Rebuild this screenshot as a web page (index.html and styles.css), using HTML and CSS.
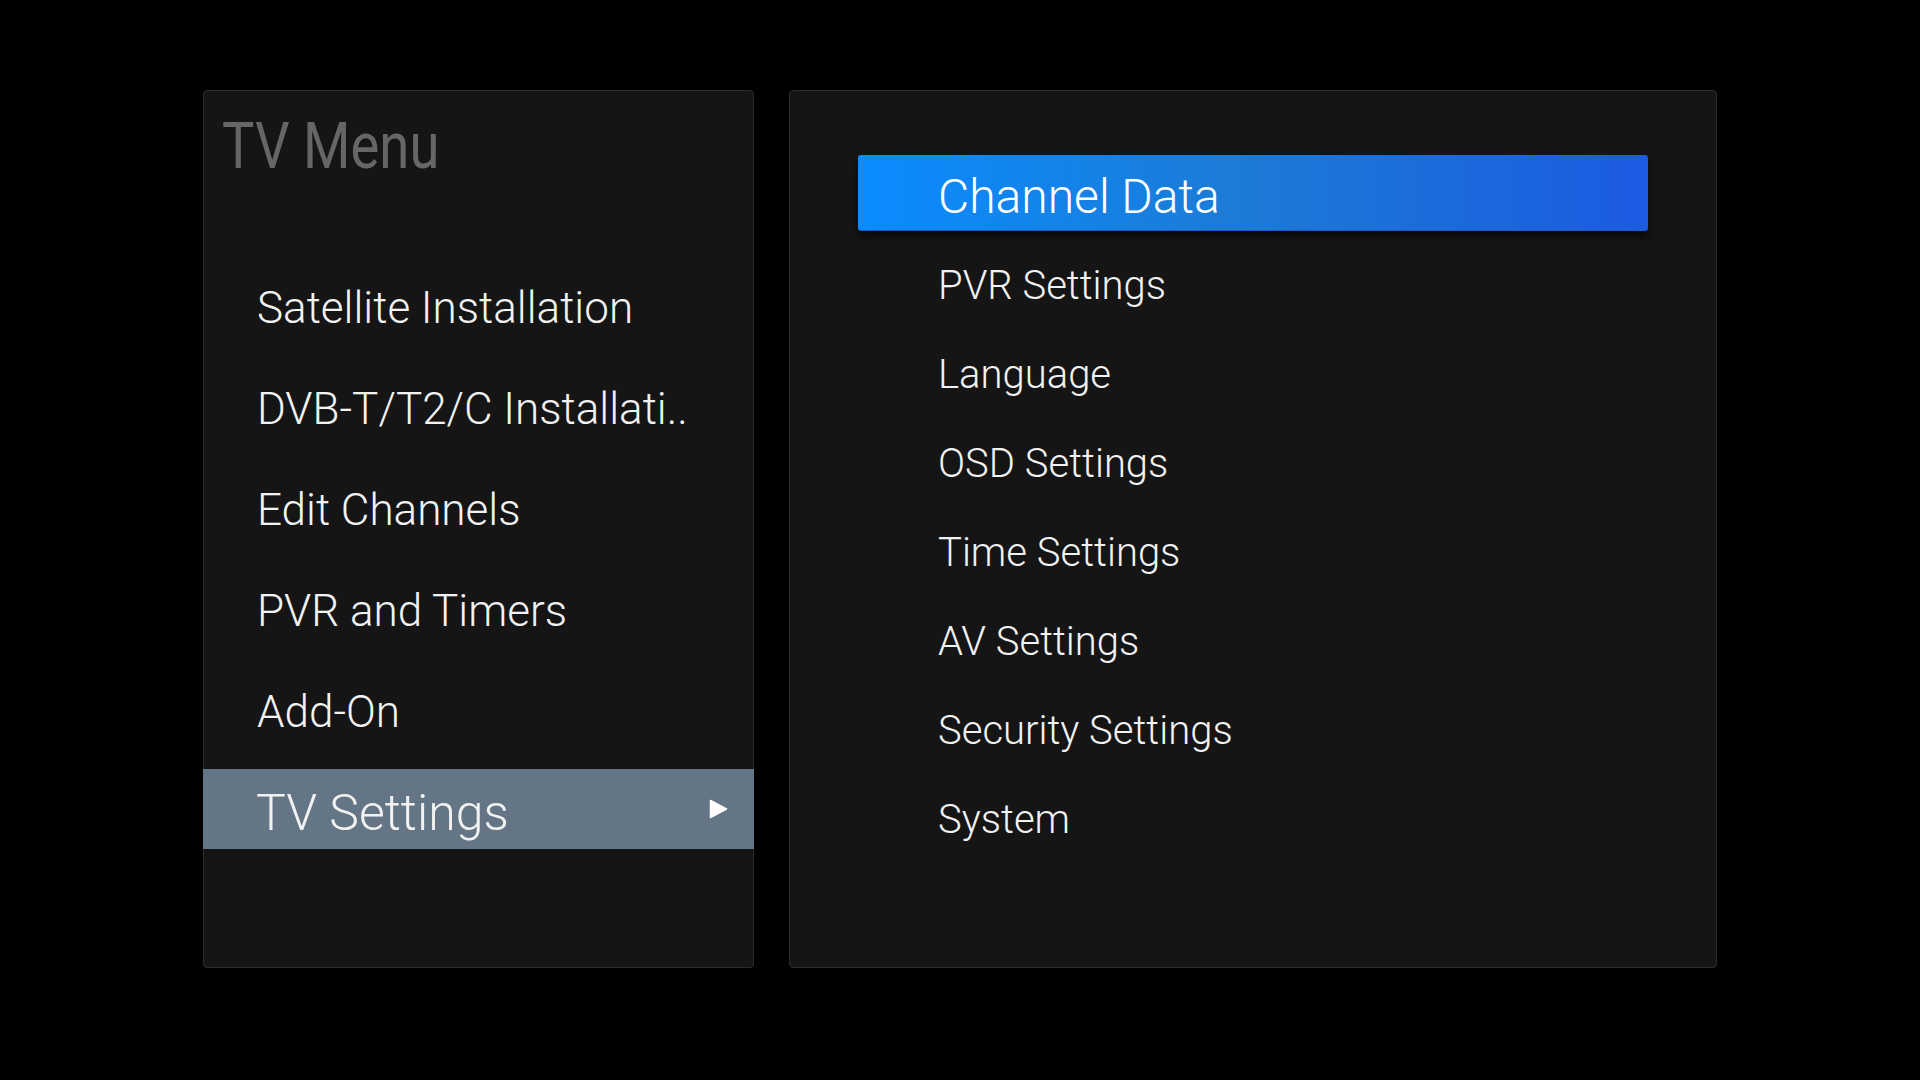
FILE: index.html
```html
<!DOCTYPE html>
<html lang="en">
<head>
  <meta charset="UTF-8">
  <meta name="viewport" content="width=device-width, initial-scale=1.0">
  <title>TV Menu</title>
  <link rel="stylesheet" href="styles.css">
</head>
<body>

  <div class="screen">
    <div class="panel main-menu">
      <h1 class="menu-title">TV Menu</h1>
      <ul class="menu-list">
        <li class="menu-item">Satellite Installation</li>
        <li class="menu-item">DVB-T/T2/C Installati..</li>
        <li class="menu-item">Edit Channels</li>
        <li class="menu-item">PVR and Timers</li>
        <li class="menu-item">Add-On</li>
        <li class="menu-item active">
          <span>TV Settings</span>
          <svg class="arrow" width="19" height="20" viewBox="0 0 19 20">
            <path d="M1.5 1.5 L17.5 10 L1.5 18.5 Z" fill="#fff" stroke="#fff" stroke-width="1.5" stroke-linejoin="round"/>
          </svg>
        </li>
      </ul>
    </div>

    <div class="panel sub-menu">
      <ul class="sub-list">
        <li class="sub-item focused">Channel Data</li>
        <li class="sub-item">PVR Settings</li>
        <li class="sub-item">Language</li>
        <li class="sub-item">OSD Settings</li>
        <li class="sub-item">Time Settings</li>
        <li class="sub-item">AV Settings</li>
        <li class="sub-item">Security Settings</li>
        <li class="sub-item">System</li>
      </ul>
    </div>
  </div>

</body>
</html>
```

FILE: styles.css
```css
body {
  margin: 0;
  padding: 0;
  background-color: #000;
  font-family: Roboto, 'Liberation Sans', sans-serif;
  color: #f2f2f2;
  width: 1920px;
  height: 1080px;
  overflow: hidden;
}

.screen {
  display: flex;
  gap: 35px;
  padding: 90px 0 0 203px;
}

.panel {
  box-sizing: border-box;
  height: 878px;
  background-color: #151515;
  border: 1px solid #2c2c2c;
  border-radius: 4px;
}

.main-menu {
  width: 551px;
}

.sub-menu {
  width: 928px;
}

.menu-title {
  margin: 24px 0 0 18px;
  font-size: 64px;
  font-weight: 400;
  line-height: 64px;
  color: #666;
  transform: scaleX(0.85);
  transform-origin: left center;
}

ul {
  list-style: none;
  margin: 0;
  padding: 0;
}

.menu-list {
  display: flex;
  flex-direction: column;
  gap: 21px;
  margin-top: 89px;
}

.menu-item {
  box-sizing: border-box;
  height: 80px;
  display: flex;
  align-items: center;
  padding-left: 53px;
  font-size: 44px;
  font-weight: 300;
  white-space: nowrap;
}

.menu-item.active {
  background-color: #647585;
  font-size: 50px;
  padding-top: 7px;
  padding-right: 26px;
  margin: -4px -1px 0;
}

.arrow {
  margin-left: auto;
  margin-top: -7px;
}

.sub-list {
  display: flex;
  flex-direction: column;
  gap: 13px;
  padding: 64px 68px 0;
}

.sub-item {
  box-sizing: border-box;
  height: 76px;
  display: flex;
  align-items: center;
  padding: 7px 0 0 80px;
  font-size: 40px;
  font-weight: 300;
  white-space: nowrap;
}

.sub-item.focused {
  font-size: 48px;
  padding-top: 8px;
  border-radius: 3px;
  border-bottom: 1px solid #1360c4;
  background: linear-gradient(90deg, #0a8cff 0%, #1c7bd6 48%, #1c5ae2 100%);
  box-shadow: 0 6px 10px rgba(0, 0, 0, 0.6);
  color: #fff;
}
```
